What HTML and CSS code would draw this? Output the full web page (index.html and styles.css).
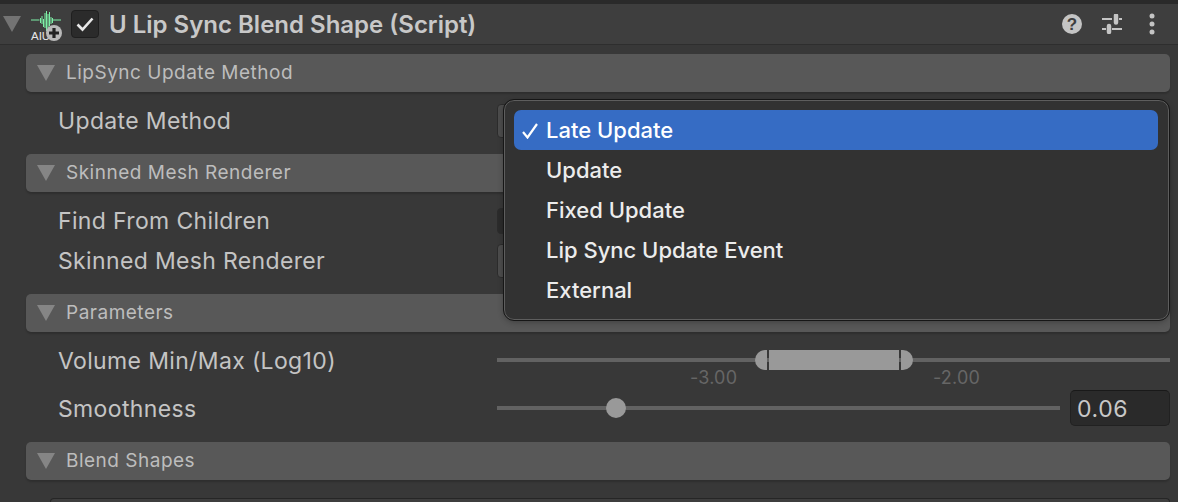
FILE: index.html
```html
<!DOCTYPE html>
<html lang="en">
<head>
<meta charset="utf-8">
<title>U Lip Sync Blend Shape</title>
<link rel="stylesheet" href="styles.css">
</head>
<body>
<div class="inspector">
  <header class="comp-header">
    <svg class="tri tri-main" viewBox="0 0 18 18"><path d="M0 1h18L9 17z"/></svg>
    <svg class="script-icon" viewBox="0 0 32 32">
      <path class="wave" d="M0 10h8.500M9.500 8v5M11 6v8M12.500 9v8M14 3v15M15.500 1v20M17 4v15M18.500 2v14M20 7v7M21.500 8v5M22 10h8"/>
      <text class="aiu" x="0" y="30">AIU</text>
      <circle class="plus-bg" cx="23" cy="23" r="8"/>
      <path class="plus" d="M23 18v10M18 23h10"/>
    </svg>
    <span class="enable-box">
      <svg viewBox="0 0 18 18"><path d="M1.500 9.500l5 5L16.500 3.500"/></svg>
    </span>
    <span class="comp-title">U Lip Sync Blend Shape (Script)</span>
    <span class="comp-actions">
      <svg class="act-help" viewBox="0 0 20 20"><circle cx="10" cy="10" r="10"/><text x="10" y="16" class="help-q">?</text></svg>
      <svg class="act-sliders" viewBox="0 0 20 20"><path d="M0 5h10M17 5h3M0 15h4M10 15h10"/><path class="knob" d="M14 1.500v7M7 12v6"/></svg>
      <svg class="act-more" viewBox="0 0 6 22"><circle cx="3" cy="3" r="2.500"/><circle cx="3" cy="11" r="2.500"/><circle cx="3" cy="19" r="2.500"/></svg>
    </span>
  </header>

  <section class="group">
    <h2 class="group-head"><svg class="tri" viewBox="0 0 18 18"><path d="M0 1h18L9 17z"/></svg>LipSync Update Method</h2>
    <div class="rows rows-a">
      <div class="row"><span class="label">Update Method</span><span class="field popup"></span></div>
    </div>
  </section>

  <section class="group">
    <h2 class="group-head"><svg class="tri" viewBox="0 0 18 18"><path d="M0 1h18L9 17z"/></svg>Skinned Mesh Renderer</h2>
    <div class="rows rows-a">
      <div class="row"><span class="label">Find From Children</span><span class="field check"></span></div>
      <div class="row"><span class="label">Skinned Mesh Renderer</span><span class="field popup"></span></div>
    </div>
  </section>

  <section class="group">
    <h2 class="group-head"><svg class="tri" viewBox="0 0 18 18"><path d="M0 1h18L9 17z"/></svg>Parameters</h2>
    <div class="rows rows-b">
      <div class="row row-range">
        <span class="label">Volume Min/Max (Log10)</span>
        <div class="range">
          <span class="track"></span>
          <span class="range-thumb">
            <span class="cap cap-l"></span><span class="mid"></span><span class="cap cap-r"></span>
          </span>
          <span class="range-val val-min">-3.00</span>
          <span class="range-val val-max">-2.00</span>
        </div>
      </div>
      <div class="row">
        <span class="label">Smoothness</span>
        <div class="slider">
          <span class="track"></span>
          <span class="thumb"></span>
        </div>
        <span class="num-input">0.06</span>
      </div>
    </div>
  </section>

  <section class="group">
    <h2 class="group-head"><svg class="tri" viewBox="0 0 18 18"><path d="M0 1h18L9 17z"/></svg>Blend Shapes</h2>
    <div class="list-box"></div>
  </section>
</div>

<div class="menu">
  <div class="menu-item selected"><svg class="tick" viewBox="0 0 16 16"><path d="M1 9l4.500 5.500L15 1"/></svg>Late Update</div>
  <div class="menu-item">Update</div>
  <div class="menu-item">Fixed Update</div>
  <div class="menu-item">Lip Sync Update Event</div>
  <div class="menu-item">External</div>
</div>
</body>
</html>
```
FILE: styles.css
```css
* { box-sizing: border-box; }
html, body { margin: 0; padding: 0; }
body {
  width: 1178px;
  height: 502px;
  overflow: hidden;
  position: relative;
  background: #383838;
  font-family: Inter, "Noto Sans", sans-serif;
  color: #c4c4c4;
}
.inspector { display: flex; flex-direction: column; }

.comp-header {
  height: 45px;
  display: flex;
  align-items: center;
  background: #3e3e3e;
  border-top: 4px solid #2a2a2a;
  border-bottom: 1px solid #2e2e2e;
  padding-left: 3px;
}
.tri { width: 18px; height: 18px; fill: #858585; flex: none; }
.tri-main { fill: #737373; margin-top: -1px; }
.script-icon { width: 32px; height: 32px; margin-left: 10px; flex: none; overflow: visible; margin-top: 3px; }
.wave { stroke: #7df0a6; stroke-width: 1; fill: none; }
.aiu { font: 11.500px "Liberation Sans", sans-serif; fill: #e6e6e6; }
.plus-bg { fill: #b9b9b9; }
.plus { stroke: #232323; stroke-width: 3.200; fill: none; }
.enable-box {
  width: 28px;
  height: 28px;
  margin-left: 8px;
  background: #2b2b2b;
  border: 1px solid #1f1f1f;
  border-radius: 4px;
  display: flex;
  align-items: center;
  justify-content: center;
  flex: none;
}
.enable-box svg { width: 18px; height: 18px; fill: none; stroke: #e8e8e8; stroke-width: 2.600; }
.comp-title { margin-left: 10px; font-size: 24px; font-weight: 600; color: #c8c8c8; white-space: nowrap; }
.comp-actions { margin-left: auto; display: flex; align-items: center; padding-right: 23px; }
.act-help { width: 20px; height: 20px; fill: #c4c4c4; }
.help-q { font: 700 17px "Liberation Sans", sans-serif; fill: #3e3e3e; text-anchor: middle; }
.act-sliders { width: 20px; height: 20px; margin-left: 20px; fill: none; stroke: #c4c4c4; stroke-width: 2; }
.act-sliders .knob { stroke-width: 4.500; stroke-linecap: round; }
.act-more { width: 6px; height: 22px; margin-left: 27px; fill: #c4c4c4; }

.group { display: flex; flex-direction: column; }
.group-head {
  margin: 9px 8px 0 26px;
  height: 38px;
  background: #585858;
  border-radius: 5px;
  box-shadow: 0 2px 2px rgba(0,0,0,.18);
  display: flex;
  align-items: center;
  gap: 11px;
  padding: 0 0 2px 11px;
  font-size: 19px;
  font-weight: 400;
  letter-spacing: .5px;
  color: #bdbdbd;
}
.group-head .tri { margin-top: 2px; }
.rows { display: flex; flex-direction: column; padding: 9px 8px 0 58px; }
.rows-a { padding-bottom: 4px; }
.rows-b { padding-bottom: 4px; }
.row { height: 40px; display: flex; align-items: center; gap: 0; position: relative; }
.row-range { height: 48px; align-items: flex-start; }
.row-range .label { line-height: 40px; }
.label { width: 439px; flex: none; font-size: 23px; letter-spacing: .35px; color: #c4c4c4; white-space: nowrap; margin-top: -1px; }
.row-range .label { margin-top: 0; }
.field { display: block; flex: none; background: #4c4c4c; border: 1px solid #2c2c2c; border-radius: 4px; }
.popup { width: 100px; height: 34px; }
.check { width: 26px; height: 26px; background: #2b2b2b; }

.range { position: relative; flex: 1; height: 40px; }
.slider { position: relative; width: 563px; flex: none; height: 40px; margin-right: 10px; }
.track { position: absolute; left: 0; right: 0; top: 17px; height: 4px; background: #626262; }
.thumb { position: absolute; left: 109px; top: 9px; width: 20px; height: 20px; border-radius: 50%; background: #999; }
.range-thumb { position: absolute; left: 258px; top: 9px; width: 158px; height: 20px; display: flex; gap: 2px; }
.cap { width: 12px; background: #999; flex: none; }
.cap-l { border-radius: 10px 0 0 10px; }
.cap-r { border-radius: 0 10px 10px 0; }
.mid { flex: 1; background: #999; }
.range-val { position: absolute; top: 27px; font-size: 18px; letter-spacing: .2px; color: #666; line-height: 20px; }
.val-min { left: 193px; }
.val-max { left: 436px; }
.num-input {
  width: 100px;
  height: 36px;
  flex: none;
  align-self: flex-start;
  margin-top: 1px;
  background: #2a2a2a;
  border: 1px solid #212121;
  border-top-color: #191919;
  border-radius: 5px;
  font-size: 23px;
  line-height: 36px;
  letter-spacing: .6px;
  padding-left: 6px;
  color: #c8c8c8;
}
.list-box {
  margin: 18px 8px 0 50px;
  height: 4px;
  background: #3e3e3e;
  border: 1px solid #262626;
  border-bottom: 0;
  border-radius: 6px 6px 0 0;
}

.menu {
  position: absolute;
  left: 504px;
  top: 100px;
  width: 665px;
  height: 220px;
  background: #323232;
  border: 1px solid #5e5e5e;
  outline: 1px solid #161616;
  border-radius: 10px;
  padding: 9px 10px 9px 9px;
  box-shadow: 0 2px 6px rgba(0,0,0,.3);
}
.menu-item {
  height: 40px;
  line-height: 41px;
  padding-left: 32px;
  position: relative;
  font-size: 22px;
  font-weight: 500;
  color: #ececec;
  border-radius: 7px;
  white-space: nowrap;
}
.selected { background: #366cc4; color: #fff; }
.tick { position: absolute; left: 8px; top: 13px; width: 16px; height: 16px; fill: none; stroke: #fff; stroke-width: 2.200; }
```
